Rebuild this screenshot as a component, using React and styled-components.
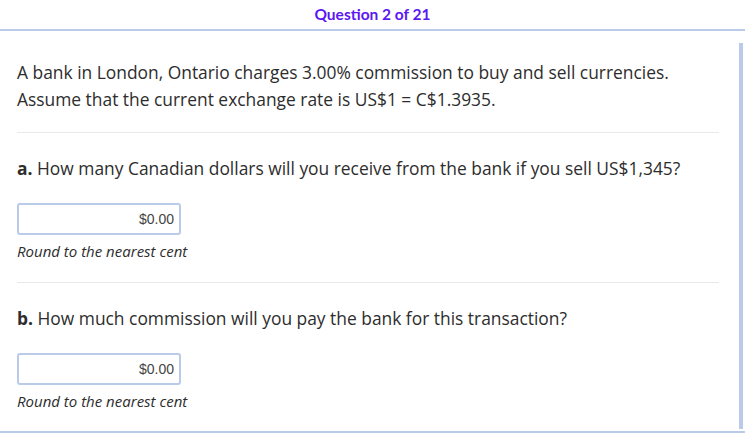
import React from "react";
import styled, { createGlobalStyle } from "styled-components";

const GlobalStyle = createGlobalStyle`
  html, body {
    margin: 0;
    padding: 0;
    background: #fff;
  }
  body {
    font-family: "Open Sans", "Liberation Sans", sans-serif;
    color: #2d2d2d;
  }
`;

const accent = "#b9cbe8";

const Page = styled.div`
  width: 745px;
  height: 433px;
  display: flex;
  flex-direction: column;
  box-sizing: border-box;
  border-bottom: 2px solid ${accent};
  overflow: hidden;
`;

const Header = styled.div`
  height: 31px;
  border-bottom: 2px solid ${accent};
  display: flex;
  align-items: center;
  justify-content: center;
  font-family: Lato, "Open Sans", sans-serif;
  font-weight: 700;
  font-size: 15.5px;
  color: #5b17f2;
  padding-bottom: 1px;
  box-sizing: border-box;
`;

const Body = styled.div`
  flex: 1;
  display: flex;
  min-height: 0;
`;

const Content = styled.div`
  flex: 1;
  padding: 28px 20px 0 17px;
`;

const Scrollbar = styled.div`
  width: 4px;
  margin: 12px 2px 2px 0;
  background: ${accent};
`;

const Intro = styled.p`
  margin: 0;
  font-size: 17.4px;
  line-height: 27px;
`;

const Divider = styled.hr`
  border: none;
  border-top: 1px solid #e9e9e9;
  margin: ${(p) => p.$top}px 0 0;
`;

const Part = styled.div`
  padding-top: 22px;
`;

const Prompt = styled.p`
  margin: 0;
  font-size: 17.4px;
  line-height: 27px;

  b {
    font-weight: 700;
  }
`;

const Answer = styled.div`
  margin-top: 21px;
  width: 164px;
  height: 32px;
  box-sizing: border-box;
  border: 2px solid ${accent};
  border-radius: 3px;
  display: flex;
  align-items: center;
  justify-content: flex-end;
  padding-right: 5px;
  font-family: "Liberation Sans", Arial, sans-serif;
  font-size: 14px;
  color: #444;
`;

const Hint = styled.div`
  margin-top: 6px;
  font-size: 15px;
  font-style: italic;
  line-height: 20px;
`;

const parts = [
  {
    label: "a.",
    text: "How many Canadian dollars will you receive from the bank if you sell US$1,345?",
  },
  {
    label: "b.",
    text: "How much commission will you pay the bank for this transaction?",
  },
];

export default function App() {
  return (
    <>
      <GlobalStyle />
      <Page>
        <Header>Question 2 of 21</Header>
        <Body>
          <Content>
            <Intro>
              A bank in London, Ontario charges 3.00% commission to buy and sell
              currencies.
              <br />
              Assume that the current exchange rate is US$1 = C$1.3935.
            </Intro>
            {parts.map((part, i) => (
              <React.Fragment key={part.label}>
                <Divider $top={i === 0 ? 19 : 21} />
                <Part>
                  <Prompt>
                    <b>{part.label}</b> {part.text}
                  </Prompt>
                  <Answer>$0.00</Answer>
                  <Hint>Round to the nearest cent</Hint>
                </Part>
              </React.Fragment>
            ))}
          </Content>
          <Scrollbar />
        </Body>
      </Page>
    </>
  );
}
